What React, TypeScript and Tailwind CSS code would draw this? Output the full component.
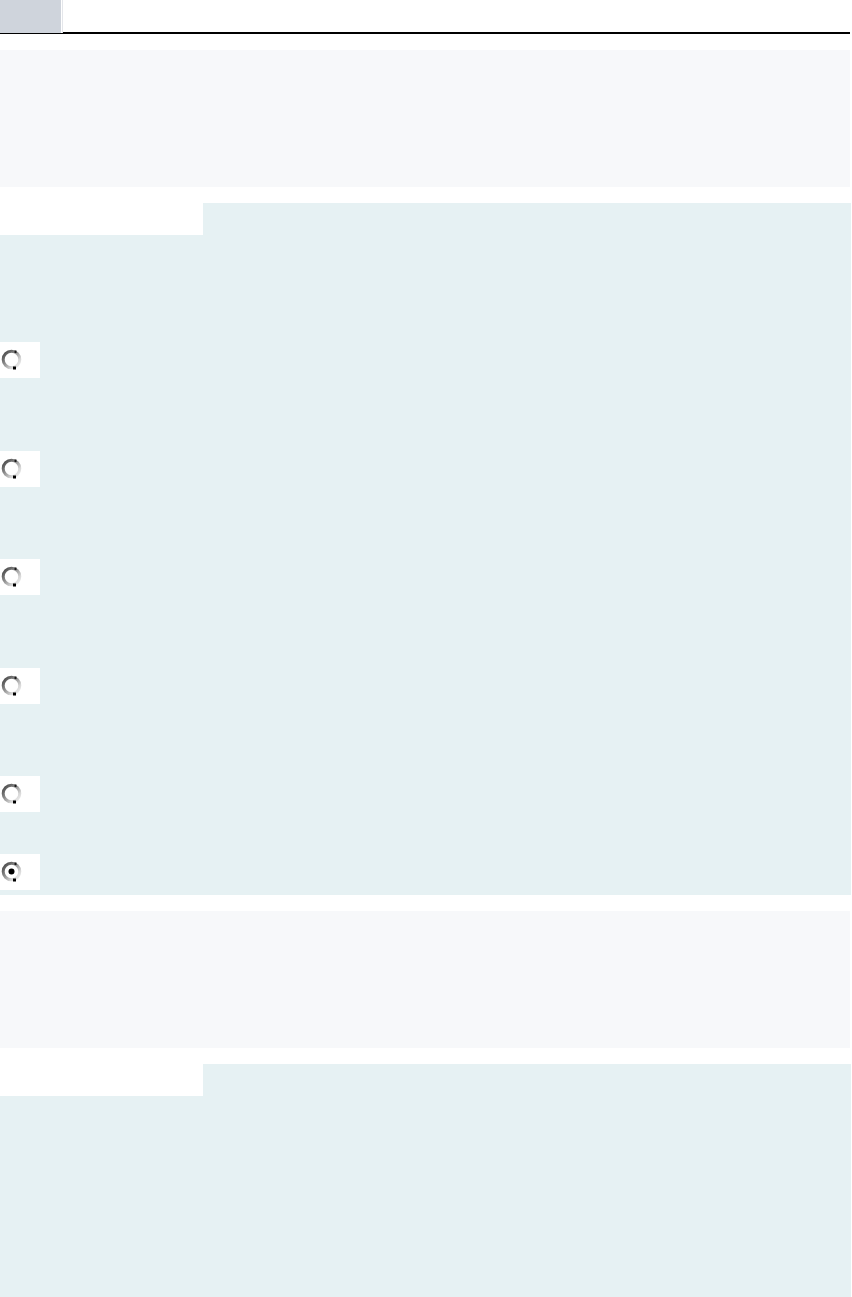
import React from "react";

// Old-style radio glyph, drawn to match the blurry bitmap in the reference
function Radio({ checked }: { checked?: boolean }) {
  return (
    <svg width="24" height="24" viewBox="0 0 24 24" className="block">
      <defs>
        <linearGradient id="rg" x1="0" y1="0" x2="1" y2="1">
          <stop offset="0" stopColor="#3f3f3f" />
          <stop offset="0.4" stopColor="#8a8a8a" />
          <stop offset="0.75" stopColor="#d8d8d8" />
          <stop offset="1" stopColor="#f2f2f2" />
        </linearGradient>
      </defs>
      <circle cx="11.5" cy="11.5" r="8.3" fill="#ffffff" stroke="url(#rg)" strokeWidth="3" />
      <rect x="14.5" y="2.5" width="2" height="2.5" fill="#1a1a1a" />
      <rect x="13" y="18.5" width="3" height="3" fill="#000" />
      {checked && <circle cx="11.5" cy="11.5" r="3" fill="#000" />}
    </svg>
  );
}

function RadioBox({ checked, className }: { checked?: boolean; className: string }) {
  return (
    <div className={`w-[40px] h-[36px] bg-white flex items-center ${className}`}>
      <Radio checked={checked} />
    </div>
  );
}

function GrayPanel() {
  return <div className="mr-[2px] h-[137px] bg-[#f7f8fa]" />;
}

function NotchTop() {
  return (
    <div className="flex h-[32px] mr-[1px]">
      <div className="w-[203px] bg-white" />
      <div className="flex-1 bg-[#e6f1f3]" />
    </div>
  );
}

export default function App() {
  return (
    <div className="w-[852px] min-h-[1297px] bg-white overflow-hidden" style={{ fontFamily: "'Liberation Sans', sans-serif" }}>
      {/* Tab strip */}
      <div className="flex h-[34px] mr-[2px] border-b-2 border-black">
        <div className="w-[61px] h-[33px] bg-[#cfd4dc]" />
        <div className="w-[1px] h-[33px] bg-white" />
        <div className="w-[1px] h-[33px] bg-[#e4e6ea]" />
      </div>

      <div className="h-[16px]" />
      <GrayPanel />
      <div className="h-[16px]" />

      {/* Options block */}
      <NotchTop />
      <div className="mr-[1px] bg-[#e6f1f3] pb-[5px] flex flex-col">
        <RadioBox className="mt-[107px]" />
        <RadioBox className="mt-[73px]" />
        <RadioBox className="mt-[72px]" />
        <RadioBox className="mt-[73px]" />
        <RadioBox className="mt-[72px]" />
        <RadioBox className="mt-[42px]" checked />
      </div>

      <div className="h-[16px]" />
      <GrayPanel />
      <div className="h-[16px]" />

      <NotchTop />
      <div className="mr-[1px] h-[240px] bg-[#e6f1f3]" />
    </div>
  );
}
